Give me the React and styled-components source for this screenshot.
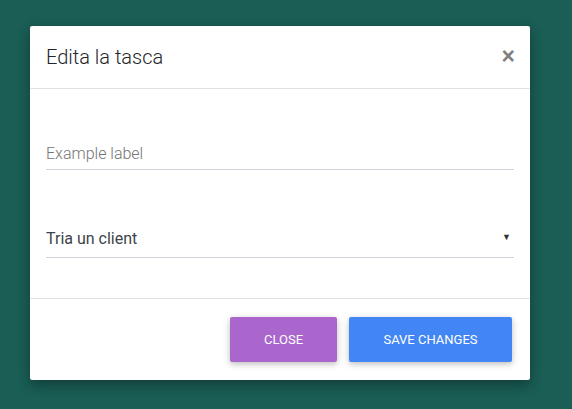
import React from "react";
import styled, { createGlobalStyle } from "styled-components";

const GlobalStyle = createGlobalStyle`
  html, body {
    margin: 0;
    padding: 0;
    background: #1a5e55;
  }
  * {
    box-sizing: border-box;
  }
`;

const Page = styled.div`
  min-height: 100vh;
  padding: 26px 42px 0 30px;
  font-family: Roboto, "Liberation Sans", sans-serif;
`;

const Modal = styled.div`
  width: 500px;
  background: #fff;
  border-radius: 2px;
  box-shadow: 0 5px 11px 0 rgba(0, 0, 0, 0.2), 0 4px 15px 0 rgba(0, 0, 0, 0.17);
  display: flex;
  flex-direction: column;
`;

const Header = styled.div`
  display: flex;
  align-items: center;
  justify-content: space-between;
  padding: 16px;
  border-bottom: 1px solid #dee2e6;
`;

const Title = styled.h4`
  margin: 0;
  font-size: 20px;
  line-height: 30px;
  font-weight: 300;
  color: #212529;
`;

const CloseX = styled.button`
  border: none;
  background: transparent;
  padding: 0;
  margin: 0 -1px 2px 0;
  font-family: "Liberation Sans", Arial, sans-serif;
  font-size: 23px;
  font-weight: 700;
  line-height: 1;
  color: #000;
  opacity: 0.5;
  cursor: pointer;
`;

const Body = styled.div`
  padding: 16px;
`;

const Field = styled.div`
  height: 40px;
  margin-top: ${({ $top }) => $top}px;
  margin-bottom: ${({ $bottom }) => $bottom || 0}px;
  border-bottom: 1px solid #ced4da;
  display: flex;
  align-items: flex-end;
  justify-content: space-between;
  padding-bottom: ${({ $pb }) => $pb}px;
`;

const Placeholder = styled.span`
  font-size: 16px;
  font-weight: 300;
  color: #757575;
`;

const SelectText = styled.span`
  font-size: 16px;
  font-weight: 400;
  color: #3d4348;
`;

const Caret = styled.span`
  font-size: 9px;
  color: #333;
  margin-right: 3px;
  margin-bottom: 6px;
`;

const Footer = styled.div`
  display: flex;
  justify-content: flex-end;
  padding: 12px;
  border-top: 1px solid #dee2e6;
`;

const Button = styled.button`
  margin: 6px;
  height: 45px;
  width: ${({ $w }) => $w}px;
  border: none;
  border-radius: 2px;
  background: ${({ $bg }) => $bg};
  color: #fff;
  font-family: Roboto, "Liberation Sans", sans-serif;
  font-size: 13px;
  text-transform: uppercase;
  box-shadow: 0 2px 5px 0 rgba(0, 0, 0, 0.16), 0 2px 10px 0 rgba(0, 0, 0, 0.12);
  cursor: pointer;
`;

export default function App() {
  return (
    <>
      <GlobalStyle />
      <Page>
        <Modal>
          <Header>
            <Title>Edita la tasca</Title>
            <CloseX aria-label="Close">×</CloseX>
          </Header>
          <Body>
            <Field $top={25} $pb={6}>
              <Placeholder>Example label</Placeholder>
            </Field>
            <Field $top={48} $bottom={24} $pb={9}>
              <SelectText>Tria un client</SelectText>
              <Caret>▼</Caret>
            </Field>
          </Body>
          <Footer>
            <Button $bg="#aa66cc" $w={107}>Close</Button>
            <Button $bg="#4285f4" $w={163}>Save changes</Button>
          </Footer>
        </Modal>
      </Page>
    </>
  );
}
